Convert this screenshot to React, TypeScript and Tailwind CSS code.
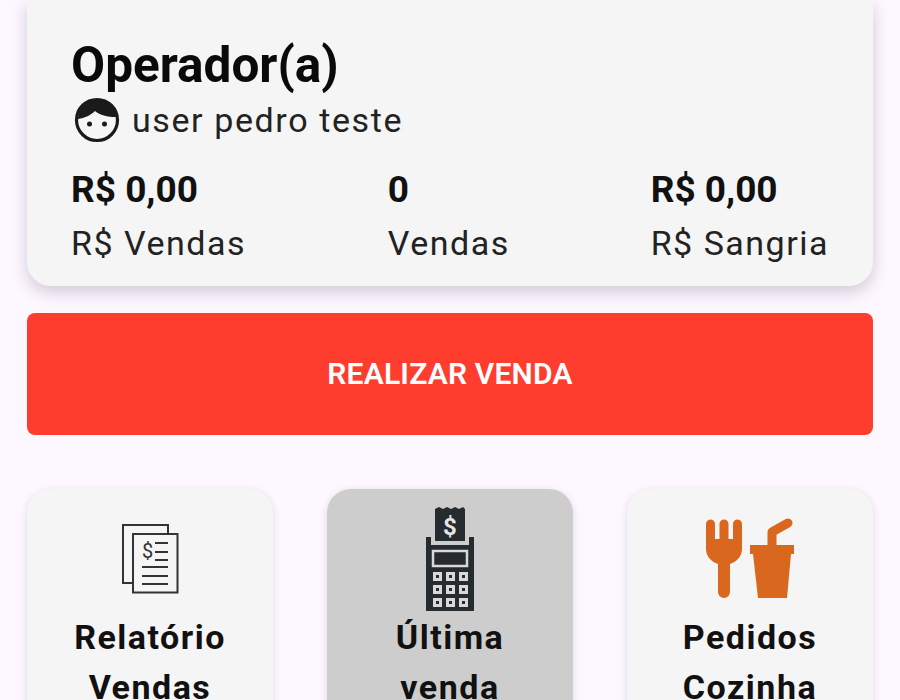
import type { ReactNode } from "react";

function FaceIcon() {
  return (
    <svg className="w-[48px] h-[48px] shrink-0" viewBox="0 0 48 48">
      <circle cx="24" cy="24" r="20.500" fill="none" stroke="#1a1a1a" strokeWidth="3.200" />
      <path d="M5 23C5 12 13 3.500 24 3.500S43 11 43 21C34 21 27 19 22 15 18 19 12 22 5 23Z" fill="#1a1a1a" />
      <circle cx="16.500" cy="28" r="2.500" fill="#1a1a1a" />
      <circle cx="31.500" cy="28" r="2.500" fill="#1a1a1a" />
    </svg>
  );
}

function ReportIcon() {
  return (
    <svg className="w-[58px] h-[70px]" viewBox="0 0 58 70" fill="none" stroke="#333" strokeWidth="2">
      <path d="M11 59H2V1H47V10" />
      <rect x="12" y="10" width="44.500" height="58.500" fill="#f5f5f5" />
      <text x="21" y="34" fontFamily="Roboto" fontSize="20" fill="#333" stroke="none">$</text>
      <path d="M34 19H47M34 28H47M34 36H47M21 43H47M21 52H47M21 60H47" />
    </svg>
  );
}

function PosIcon() {
  const keys = [];
  for (const y of [65, 78, 91]) {
    for (const x of [8, 21, 34]) {
      keys.push(
        <g key={`${x}-${y}`}>
          <rect x={x} y={y} width="9" height="9" fill="#d8d8d8" />
          <rect x={x + 3} y={y + 3} width="3" height="3" fill="#262b2f" />
        </g>
      );
    }
  }
  return (
    <svg className="w-[50px] h-[104px]" viewBox="0 0 50 104">
      <path d="M1 30H6V38H44V30H49V104H1Z" fill="#262b2f" />
      <path d="M10 2 14 0 18 2 22 0 26 2 30 0 34 2 38 0 40 2V34H10Z" fill="#262b2f" />
      <text x="25" y="28" textAnchor="middle" fontFamily="Roboto" fontWeight="700" fontSize="24" fill="#e5e5e5">$</text>
      <rect x="8" y="44" width="34" height="15" fill="#262b2f" stroke="#d8d8d8" strokeWidth="2.500" />
      {keys}
    </svg>
  );
}

function FoodIcon() {
  return (
    <svg className="w-[90px] h-[82px]" viewBox="0 0 90 82" fill="#d9671d">
      <path d="M1 6a4.500 4.500 0 0 1 9 0V21H14.500V6a4.500 4.500 0 0 1 9 0V21H28V6a4.500 4.500 0 0 1 9 0V31C37 39 31 44 25 46V74a6 6 0 0 1-12 0V46C7 44 1 39 1 31Z" />
      <path d="M45 27H89V36H86L82 80H53L48 36H45Z" />
      <path d="M67 30V14L83 5" fill="none" stroke="#d9671d" strokeWidth="9" strokeLinecap="round" strokeLinejoin="round" />
    </svg>
  );
}

function Stat({ value, label, className }: { value: string; label: string; className: string }) {
  return (
    <div className={className}>
      <p className="text-[37px] leading-[42px] font-bold whitespace-nowrap text-[#111]">{value}</p>
      <p className="mt-[11px] text-[34px] leading-[42px] tracking-[1.500px] whitespace-nowrap text-[#222]">{label}</p>
    </div>
  );
}

function Tile({ icon, label, active, iconBox }: { icon: ReactNode; label: string[]; active?: boolean; iconBox: string }) {
  return (
    <div
      className={
        active
          ? "w-[246px] h-[300px] rounded-[24px] bg-[#cdcdcd] shadow-[0_2px_8px_rgba(0,0,0,0.12)] flex flex-col items-center"
          : "w-[246px] h-[300px] rounded-[24px] bg-[#f5f5f5] shadow-[0_2px_8px_rgba(0,0,0,0.12)] flex flex-col items-center"
      }
    >
      <div className={iconBox}>{icon}</div>
      <p className="-mt-[1px] text-center text-[34px] leading-[50px] font-bold tracking-[1.500px] text-[#111]">
        {label[0]}
        <br />
        {label[1]}
      </p>
    </div>
  );
}

export default function App() {
  return (
    <div className="w-[900px] h-[700px] overflow-hidden bg-[#fdf7ff] px-[27px] font-['Roboto',sans-serif]">
      {/* Operator card */}
      <div className="h-[286px] rounded-b-[24px] bg-[#f5f5f5] shadow-[0_6px_16px_rgba(60,40,70,0.22)] pt-[38px] px-[44px]">
        <h1 className="text-[49.500px] leading-[54px] font-bold text-[#0a0a0a]">Operador(a)</h1>
        <div className="flex items-center gap-[11px] ml-[2px] mt-[4px]">
          <FaceIcon />
          <span className="text-[34px] leading-[48px] tracking-[1.600px] text-[#222]">user pedro teste</span>
        </div>
        <div className="flex mt-[25px]">
          <Stat value="R$ 0,00" label="R$ Vendas" className="w-[317px]" />
          <Stat value="0" label="Vendas" className="w-[263px]" />
          <Stat value="R$ 0,00" label="R$ Sangria" className="flex-1" />
        </div>
      </div>

      <button className="mt-[27px] w-full h-[122px] rounded-[8px] bg-[#ff3d2e] pb-[2px] text-white text-[30px] tracking-[0.200px] font-semibold">
        REALIZAR VENDA
      </button>

      <div className="mt-[54px] grid grid-cols-3 gap-[54px]">
        <Tile icon={<ReportIcon />} label={["Relatório", "Vendas"]} iconBox="h-[124px] pt-[35px]" />
        <Tile icon={<PosIcon />} label={["Última", "venda"]} active iconBox="h-[124px] pt-[18px]" />
        <Tile icon={<FoodIcon />} label={["Pedidos", "Cozinha"]} iconBox="h-[124px] pt-[29px]" />
      </div>
    </div>
  );
}
